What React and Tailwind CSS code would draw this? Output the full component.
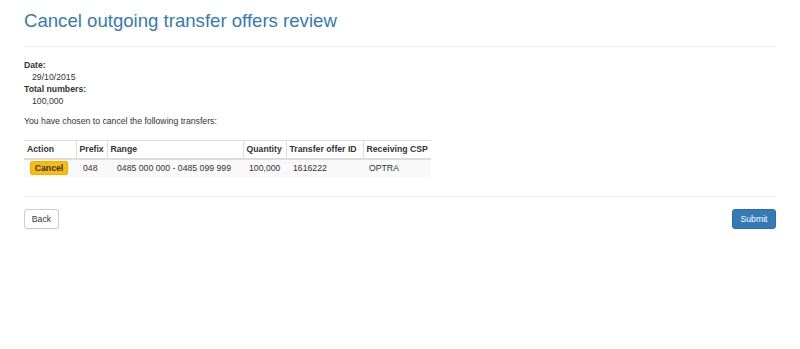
import React from "react";

const rows = [
  { prefix: "048", range: "0485 000 000 - 0485 099 999", quantity: "100,000", offerId: "1616222", csp: "OPTRA" },
];

export default function App() {
  return (
    <div className="w-[800px] h-[349px] bg-white px-[24px] text-[#333] text-[8.7px] leading-[12px] font-['Liberation_Sans',Arial,sans-serif]">
      {/* Page header */}
      <div className="pt-[10px] pb-[15px] border-b border-[#eee]">
        <h1 className="text-[18.6px] leading-[21px] text-[#337ab7] font-normal">
          Cancel outgoing transfer offers review
        </h1>
      </div>

      {/* Summary */}
      <dl className="mt-[12px]">
        <dt className="font-bold">Date:</dt>
        <dd className="pl-[8px]">29/10/2015</dd>
        <dt className="font-bold">Total numbers:</dt>
        <dd className="pl-[8px]">100,000</dd>
      </dl>

      <p className="mt-[8px]">You have chosen to cancel the following transfers:</p>

      <table className="mt-[13px] table-fixed border-collapse w-[407px]">
        <thead>
          <tr className="h-[18px] border-t border-[#ddd] border-b-2 border-b-[#ddd]">
            <th className="w-[52px] text-left font-bold px-[3px] border-r border-[#ddd]">Action</th>
            <th className="w-[31px] text-left font-bold px-[3px] border-r border-[#ddd]">Prefix</th>
            <th className="w-[136px] text-left font-bold px-[3px] border-r border-[#ddd]">Range</th>
            <th className="w-[43px] text-left font-bold px-[3px] border-r border-[#ddd]">Quantity</th>
            <th className="w-[77px] text-left font-bold px-[3px] border-r border-[#ddd]">Transfer offer ID</th>
            <th className="w-[68px] text-left font-bold px-[3px]">Receiving CSP</th>
          </tr>
        </thead>
        <tbody>
          {rows.map((r) => (
            <tr key={r.offerId} className="h-[18px] bg-[#f9f9f9]">
              <td className="px-[6px]">
                <button className="h-[14px] w-[38px] rounded-[2px] bg-[#f9bc0c] border border-[#eeb200] font-bold text-[#333] leading-[12px]">
                  Cancel
                </button>
              </td>
              <td className="pl-[7px]">{r.prefix}</td>
              <td className="pl-[10px] whitespace-nowrap">{r.range}</td>
              <td className="pl-[6px]">{r.quantity}</td>
              <td className="pl-[7px]">{r.offerId}</td>
              <td className="pl-[6px]">{r.csp}</td>
            </tr>
          ))}
        </tbody>
      </table>

      {/* Actions */}
      <div className="mt-[19px] border-t border-[#eee] pt-[12px] flex justify-between">
        <button className="h-[20px] w-[35px] bg-white border border-[#ccc] rounded-[3px] text-[#333] shadow-[0_1px_1px_rgba(0,0,0,0.05)]">
          Back
        </button>
        <button className="h-[20px] w-[44px] bg-[#337ab7] border border-[#2e6da4] rounded-[3px] text-white">
          Submit
        </button>
      </div>
    </div>
  );
}
